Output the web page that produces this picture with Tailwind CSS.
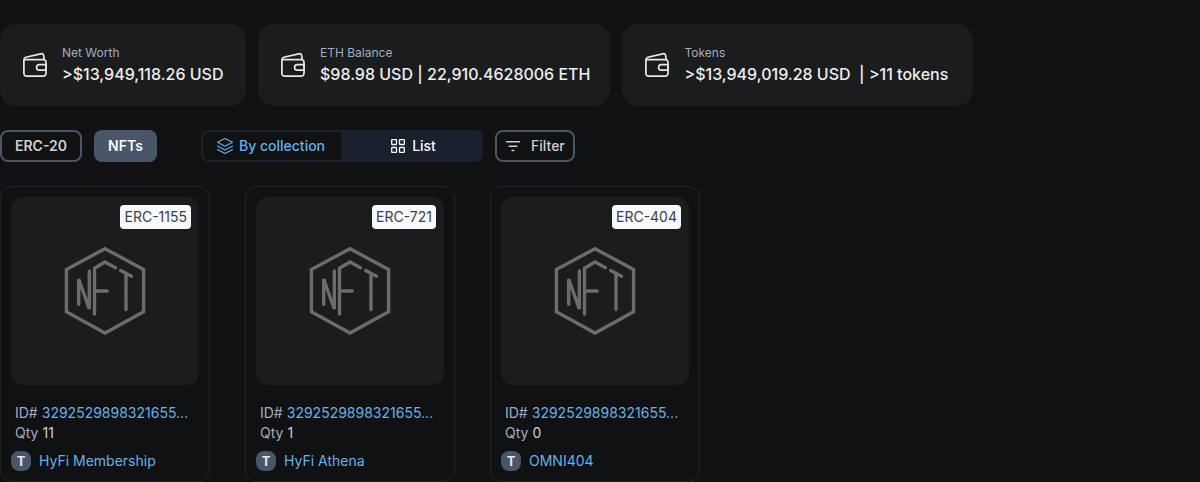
<!DOCTYPE html>
<html lang="en">
<head>
<meta charset="utf-8">
<meta name="viewport" content="width=device-width, initial-scale=1">
<title>Address tokens</title>
<script src="https://cdn.jsdelivr.net/npm/@tailwindcss/browser@4"></script>
</head>
<body class="bg-[#101112] font-[Inter,sans-serif] text-sm text-[#cfcfd0]">
<svg class="hidden" aria-hidden="true">
  <symbol id="wallet" viewBox="0 0 30 30">
    <g fill="none" stroke="currentColor" stroke-width="1.7" stroke-linejoin="round" stroke-linecap="round">
      <path d="M4 9.700H23.500a2.500 2.500 0 0 1 2.500 2.500V23.300a2.800 2.800 0 0 1-2.800 2.800H6.600A2.700 2.700 0 0 1 3.900 23.400V9.700C3.900 8.200 4.600 7.500 5.800 7.200L20.700 3.800C22.200 3.500 23.300 4.100 23.600 5.400L24.200 9.700"/>
      <path d="M26 14.700H19.300a2.700 2.700 0 0 0 0 5.400H26z"/>
    </g>
  </symbol>
  <symbol id="nft" viewBox="0 0 100 100">
    <g fill="none" stroke="currentColor" stroke-width="3.400" stroke-linecap="round">
      <path d="M50 8.700 88.600 29.500V71.800L50 93 11.400 71.800V29.500Z"/>
      <path d="M23.700 64.300V39L34.300 69V31"/>
      <path d="M39.500 74V28.300L50 22 60.500 27.700M39.500 51H52.200M65.700 30.600 76.500 36.200M71 34V69.500"/>
    </g>
  </symbol>
</svg>

<main class="pt-6">
  <section aria-label="Balances" class="flex flex-wrap gap-3">
    <div class="flex min-w-[246px] items-center gap-3 rounded-2xl bg-[#1b1c1d] p-5">
      <svg class="size-[30px] text-[#e8e8e8]" aria-hidden="true"><use href="#wallet"/></svg>
      <div>
        <p class="text-xs leading-[18px] text-[#a0aec0]">Net Worth</p>
        <p class="text-base font-medium text-[#eeeeee]">&gt;$13,949,118.26 USD</p>
      </div>
    </div>
    <div class="flex min-w-[352px] items-center gap-3 rounded-2xl bg-[#1b1c1d] p-5">
      <svg class="size-[30px] text-[#e8e8e8]" aria-hidden="true"><use href="#wallet"/></svg>
      <div>
        <p class="text-xs leading-[18px] text-[#a0aec0]">ETH Balance</p>
        <p class="text-base font-medium text-[#eeeeee]">$98.98 USD | 22,910.4628006 ETH</p>
      </div>
    </div>
    <div class="flex min-w-[351px] items-center gap-3 rounded-2xl bg-[#1b1c1d] p-5">
      <svg class="size-[30px] text-[#e8e8e8]" aria-hidden="true"><use href="#wallet"/></svg>
      <div>
        <p class="text-xs leading-[18px] text-[#a0aec0]">Tokens</p>
        <p class="text-base font-medium text-[#eeeeee]">&gt;$13,949,019.28 USD &nbsp;| &gt;11 tokens</p>
      </div>
    </div>
  </section>

  <div class="mt-6 flex flex-wrap items-center gap-x-11">
    <div class="flex gap-3" role="tablist" aria-label="Token type">
      <button type="button" role="tab" aria-selected="false" class="h-8 min-w-[82px] rounded-lg border-2 border-[#4a5568] px-3 font-semibold">ERC-20</button>
      <button type="button" role="tab" aria-selected="true" class="h-8 min-w-[63px] rounded-lg bg-[#4a5568] px-3 font-semibold text-[#f7fafc]">NFTs</button>
    </div>
    <div class="flex flex-wrap gap-3">
      <div class="flex" role="group" aria-label="Display type">
        <button type="button" aria-pressed="false" class="flex h-8 min-w-[140px] items-center gap-1 rounded-l-lg border-2 border-r-0 border-[#1a202c] px-3 font-medium text-[#63b3ed]">
          <svg class="size-5" viewBox="0 0 20 20" fill="none" stroke="currentColor" stroke-width="1.100" stroke-linejoin="round" stroke-linecap="round" aria-hidden="true">
            <path d="M10 2.500 17.500 6.300 10 10.200 2.500 6.300Z"/>
            <path d="M2.500 10 10 13.900 17.500 10M2.500 13.500 10 17.400 17.500 13.500"/>
          </svg>
          By collection
        </button>
        <button type="button" aria-pressed="true" class="flex h-8 min-w-[142px] items-center justify-center gap-1 rounded-r-lg bg-[#1a202c] font-medium text-[#f7fafc]">
          <svg class="size-5" viewBox="0 0 20 20" fill="none" stroke="currentColor" stroke-width="1.300" aria-hidden="true">
            <rect x="3.700" y="3.700" width="4.800" height="4.800" rx=".4"/>
            <rect x="11.500" y="3.700" width="4.800" height="4.800" rx=".4"/>
            <rect x="3.700" y="11.500" width="4.800" height="4.800" rx=".4"/>
            <rect x="11.500" y="11.500" width="4.800" height="4.800" rx=".4"/>
          </svg>
          List
        </button>
      </div>
      <button type="button" class="flex h-8 min-w-20 items-center gap-2 rounded-lg border-2 border-[#4a5568] px-1.5 font-medium">
        <svg class="size-5" viewBox="0 0 20 20" fill="none" stroke="currentColor" stroke-width="1.500" stroke-linecap="round" aria-hidden="true">
          <path d="M3.700 5.700H16.300M6.200 10.200H13.800M9.200 14.500H10.800"/>
        </svg>
        Filter
      </button>
    </div>
  </div>

  <ul class="mt-6 flex flex-wrap gap-[35px]">
    <li class="w-[210px] rounded-xl border border-[#232425] p-2.5">
      <a href="#" aria-label="ERC-1155 item" class="relative flex aspect-square items-center justify-center rounded-xl bg-[#1b1c1d]">
        <svg class="size-[106px] text-[#6b6c6c]" viewBox="-3 -2 106 106" aria-hidden="true"><use href="#nft" width="100" height="100"/></svg>
        <span class="absolute top-2 right-2 rounded-sm bg-[#f7fafc] px-1 leading-6 text-[#404142]">ERC-1155</span>
      </a>
      <div class="mt-[18px] px-1">
        <p class="flex gap-1"><span class="text-[#a0aec0]">ID#</span><a href="#" class="text-[#63b3ed]">3292529898321655...</a></p>
        <p class="flex gap-1"><span class="text-[#a0aec0]">Qty</span><span>11</span></p>
      </div>
      <div class="mt-2 flex items-center gap-2">
        <span class="size-5 rounded-lg bg-[#4a5568] text-center text-[13px] leading-5 font-bold text-[#e2e8f0]">T</span>
        <a href="#" class="text-[#63b3ed]">HyFi Membership</a>
      </div>
    </li>
    <li class="w-[210px] rounded-xl border border-[#232425] p-2.5">
      <a href="#" aria-label="ERC-721 item" class="relative flex aspect-square items-center justify-center rounded-xl bg-[#1b1c1d]">
        <svg class="size-[106px] text-[#6b6c6c]" viewBox="-3 -2 106 106" aria-hidden="true"><use href="#nft" width="100" height="100"/></svg>
        <span class="absolute top-2 right-2 rounded-sm bg-[#f7fafc] px-1 leading-6 text-[#404142]">ERC-721</span>
      </a>
      <div class="mt-[18px] px-1">
        <p class="flex gap-1"><span class="text-[#a0aec0]">ID#</span><a href="#" class="text-[#63b3ed]">3292529898321655...</a></p>
        <p class="flex gap-1"><span class="text-[#a0aec0]">Qty</span><span>1</span></p>
      </div>
      <div class="mt-2 flex items-center gap-2">
        <span class="size-5 rounded-lg bg-[#4a5568] text-center text-[13px] leading-5 font-bold text-[#e2e8f0]">T</span>
        <a href="#" class="text-[#63b3ed]">HyFi Athena</a>
      </div>
    </li>
    <li class="w-[210px] rounded-xl border border-[#232425] p-2.5">
      <a href="#" aria-label="ERC-404 item" class="relative flex aspect-square items-center justify-center rounded-xl bg-[#1b1c1d]">
        <svg class="size-[106px] text-[#6b6c6c]" viewBox="-3 -2 106 106" aria-hidden="true"><use href="#nft" width="100" height="100"/></svg>
        <span class="absolute top-2 right-2 rounded-sm bg-[#f7fafc] px-1 leading-6 text-[#404142]">ERC-404</span>
      </a>
      <div class="mt-[18px] px-1">
        <p class="flex gap-1"><span class="text-[#a0aec0]">ID#</span><a href="#" class="text-[#63b3ed]">3292529898321655...</a></p>
        <p class="flex gap-1"><span class="text-[#a0aec0]">Qty</span><span>0</span></p>
      </div>
      <div class="mt-2 flex items-center gap-2">
        <span class="size-5 rounded-lg bg-[#4a5568] text-center text-[13px] leading-5 font-bold text-[#e2e8f0]">T</span>
        <a href="#" class="text-[#63b3ed]">OMNI404</a>
      </div>
    </li>
  </ul>
</main>
</body>
</html>
